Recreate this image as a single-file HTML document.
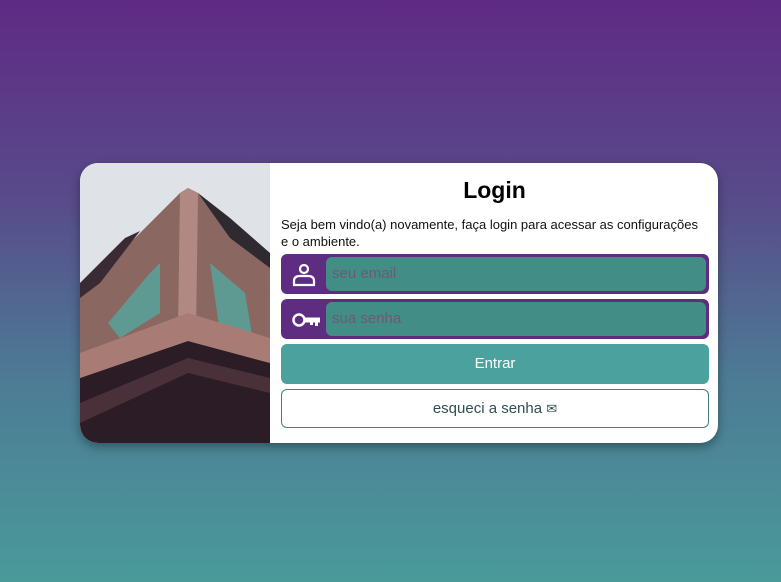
<!DOCTYPE html>
<html><head><meta charset="utf-8"><style>
*{box-sizing:border-box;margin:0;padding:0}
html,body{width:781px;height:582px;overflow:hidden}
body{background:linear-gradient(180deg,#5e2a84 0%,#584c8a 35%,#4d7b95 65%,#4a9a9a 100%);font-family:"Liberation Sans",sans-serif;position:relative}
.card{position:absolute;left:80px;top:163px;width:638px;height:280px;background:#fff;border-radius:18px;overflow:hidden;box-shadow:0 4px 10px rgba(0,0,0,.35)}
.img{position:absolute;left:0;top:0;width:190px;height:280px;border-right:1px solid #c9bedf}
.right{position:absolute;left:191px;top:0;width:447px;height:280px}
h1{position:absolute;left:0;width:447px;top:14px;text-align:center;font-size:23px;font-weight:bold;color:#000}
.desc{position:absolute;left:10px;top:53px;width:420px;font-size:13px;line-height:17px;color:#111}
.inp{position:absolute;left:10px;width:428px;height:40px;background:#5e2d82;border-radius:6px}
.inp .f{position:absolute;left:45px;top:3px;right:3px;bottom:3px;background:#438d87;border-radius:6px;color:#6e5a6e;font-size:15px;line-height:34px;padding-left:6px}
.inp svg{position:absolute;left:10px;top:9px}
.btn{position:absolute;left:10px;width:428px;height:40px;border-radius:6px;text-align:center;font-size:15px;line-height:40px}
</style></head><body>
<div class="card">
<div class="img"><svg width="190" height="280" viewBox="0 0 190 280">
<rect width="190" height="280" fill="#dfe3e8"/>
<polygon points="0,120 50,80 100,30 108,25 108,170 0,200" fill="#8b6762"/>
<polygon points="108,25 118,30 150,70 190,100 190,200 108,170" fill="#8b6762"/>
<polygon points="28,160 70,110 80,100 80,150 40,175" fill="#5f9a92"/>
<polygon points="130,100 165,130 175,190 140,170" fill="#5f9a92"/>
<polygon points="100,30 108,25 118,30 116,170 98,170" fill="#b08a82"/>
<polygon points="0,120 45,75 60,68 20,120 0,135" fill="#3a2a33"/>
<polygon points="118,30 150,55 190,90 190,105 150,75" fill="#2e2a30"/>
<polygon points="0,190 108,150 190,175 190,200 108,178 0,215" fill="#a87c74"/>
<polygon points="0,215 108,178 190,200 190,280 0,280" fill="#2c1c25"/>
<polygon points="0,240 108,195 190,215 190,230 108,210 0,260" fill="#4a3038"/>
</svg></div>
<div class="right">
<h1>Login</h1>
<div class="desc">Seja bem vindo(a) novamente, faça login para acessar as configurações e o ambiente.</div>
<div class="inp" style="top:91px"><svg width="26" height="24" viewBox="0 0 26 24"><circle cx="13" cy="6" r="4" fill="none" stroke="#fff" stroke-width="2.2"/><path d="M3 22 L3 18 Q3 13 9 13 L17 13 Q23 13 23 18 L23 22 Z" fill="none" stroke="#fff" stroke-width="2.2"/></svg><div class="f">seu email</div></div>
<div class="inp" style="top:136px"><svg width="30" height="24" viewBox="0 0 30 24"><circle cx="8" cy="12" r="5.5" fill="none" stroke="#fff" stroke-width="2.5"/><path d="M13 9.5 H29 V14.5 H27 V18 H24 V14.5 H22 V17 H19 V14.5 H13 Z" fill="#fff"/></svg><div class="f">sua senha</div></div>
<div class="btn" style="top:181px;background:#4ba19e;color:#fff">Entrar</div>
<div class="btn" style="top:226px;height:39px;border:1px solid #3f7f7a;color:#2f4f4f;line-height:37px">esqueci a senha <span style="font-size:13px">&#9993;</span></div>
</div>
</div>
</body></html>
